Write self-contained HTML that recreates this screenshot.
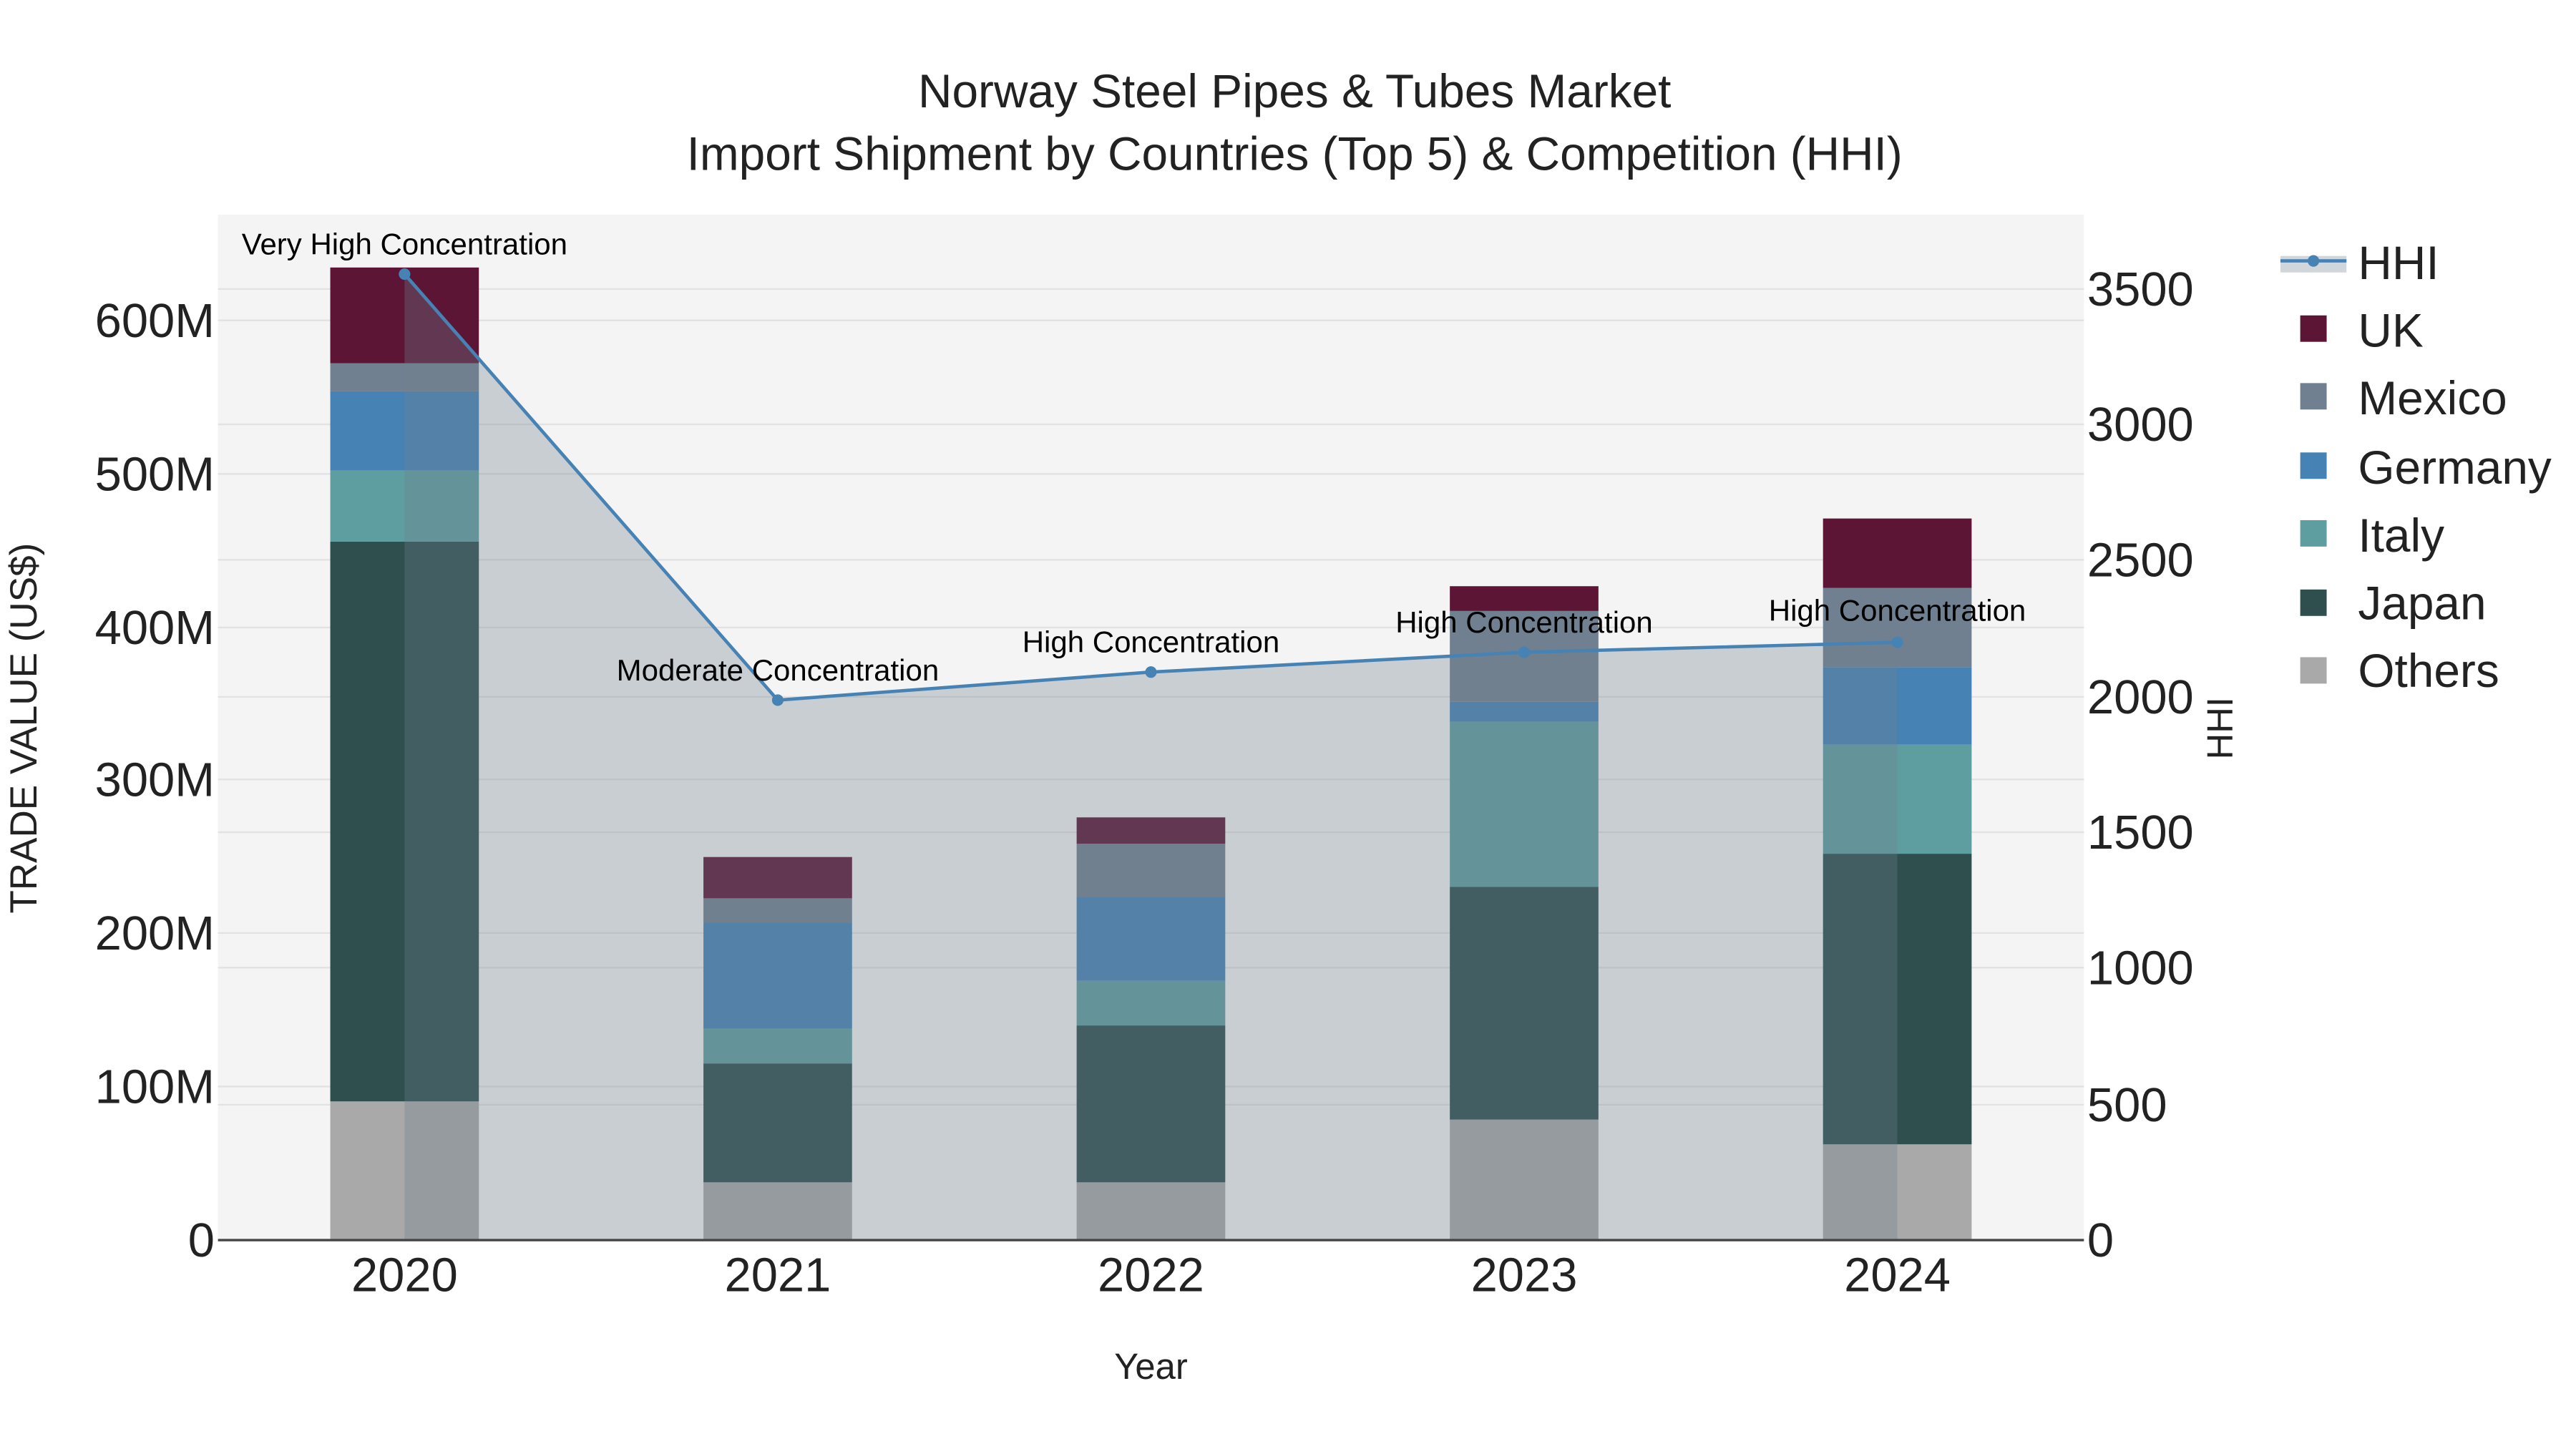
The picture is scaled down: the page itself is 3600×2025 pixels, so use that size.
<!DOCTYPE html>
<html><head><meta charset="utf-8"><style>
html,body{margin:0;padding:0;background:#fff;}
svg{display:block;}
text{font-family:"Liberation Sans",sans-serif;}
</style></head><body>
<svg width="3600" height="2025" viewBox="0 0 1560 877.5" xmlns="http://www.w3.org/2000/svg">
<rect width="1560" height="877.5" fill="#fff"/>
<rect x="132" y="130" width="1130" height="621" fill="#f4f4f4"/>
<g stroke="#e2e2e2" stroke-width="1">
<line x1="132" x2="1262" y1="658" y2="658"/><line x1="132" x2="1262" y1="565" y2="565"/>
<line x1="132" x2="1262" y1="472" y2="472"/><line x1="132" x2="1262" y1="380" y2="380"/>
<line x1="132" x2="1262" y1="287" y2="287"/><line x1="132" x2="1262" y1="194" y2="194"/>
<line x1="132" x2="1262" y1="669" y2="669"/><line x1="132" x2="1262" y1="586" y2="586"/>
<line x1="132" x2="1262" y1="504" y2="504"/><line x1="132" x2="1262" y1="422" y2="422"/>
<line x1="132" x2="1262" y1="339" y2="339"/><line x1="132" x2="1262" y1="257" y2="257"/>
<line x1="132" x2="1262" y1="175" y2="175"/>
</g>
<g>
<rect x="200" y="667" width="90" height="84" fill="#a9a9a9"/>
<rect x="200" y="328" width="90" height="339" fill="#2f4f4f"/>
<rect x="200" y="285" width="90" height="43" fill="#5f9ea0"/>
<rect x="200" y="237" width="90" height="48" fill="#4682b4"/>
<rect x="200" y="220" width="90" height="17" fill="#708090"/>
<rect x="200" y="162" width="90" height="58" fill="#5c1535"/>
<rect x="426" y="716" width="90" height="35" fill="#a9a9a9"/>
<rect x="426" y="644" width="90" height="72" fill="#2f4f4f"/>
<rect x="426" y="623" width="90" height="21" fill="#5f9ea0"/>
<rect x="426" y="559" width="90" height="64" fill="#4682b4"/>
<rect x="426" y="544" width="90" height="15" fill="#708090"/>
<rect x="426" y="519" width="90" height="25" fill="#5c1535"/>
<rect x="652" y="716" width="90" height="35" fill="#a9a9a9"/>
<rect x="652" y="621" width="90" height="95" fill="#2f4f4f"/>
<rect x="652" y="594" width="90" height="27" fill="#5f9ea0"/>
<rect x="652" y="543" width="90" height="51" fill="#4682b4"/>
<rect x="652" y="511" width="90" height="32" fill="#708090"/>
<rect x="652" y="495" width="90" height="16" fill="#5c1535"/>
<rect x="878" y="678" width="90" height="73" fill="#a9a9a9"/>
<rect x="878" y="537" width="90" height="141" fill="#2f4f4f"/>
<rect x="878" y="437" width="90" height="100" fill="#5f9ea0"/>
<rect x="878" y="425" width="90" height="12" fill="#4682b4"/>
<rect x="878" y="370" width="90" height="55" fill="#708090"/>
<rect x="878" y="355" width="90" height="15" fill="#5c1535"/>
<rect x="1104" y="693" width="90" height="58" fill="#a9a9a9"/>
<rect x="1104" y="517" width="90" height="176" fill="#2f4f4f"/>
<rect x="1104" y="451" width="90" height="66" fill="#5f9ea0"/>
<rect x="1104" y="404" width="90" height="47" fill="#4682b4"/>
<rect x="1104" y="356" width="90" height="48" fill="#708090"/>
<rect x="1104" y="314" width="90" height="42" fill="#5c1535"/>
</g>
<polygon points="245,166 471,424 697,407 923,395 1149,389 1149,751 245,751" fill="rgba(112,128,144,0.32)"/>
<polyline points="245,166 471,424 697,407 923,395 1149,389" fill="none" stroke="#4682b4" stroke-width="2"/>
<g fill="#4682b4"><circle cx="245" cy="166" r="3.5"/><circle cx="471" cy="424" r="3.5"/><circle cx="697" cy="407" r="3.5"/><circle cx="923" cy="395" r="3.5"/><circle cx="1149" cy="389" r="3.5"/></g>
<line x1="132" x2="1262" y1="751" y2="751" stroke="#444" stroke-width="1.5"/>
<g font-size="18.2" fill="#000" text-anchor="middle">
<text x="245" y="154">Very High Concentration</text>
<text x="471" y="412">Moderate Concentration</text>
<text x="697" y="395">High Concentration</text>
<text x="923" y="383">High Concentration</text>
<text x="1149" y="376">High Concentration</text>
</g>
<g font-size="28.5" fill="#222" text-anchor="middle">
<text x="784" y="65">Norway Steel Pipes &amp; Tubes Market</text>
<text x="784" y="103">Import Shipment by Countries (Top 5) &amp; Competition (HHI)</text>
</g>
<g font-size="29" fill="#222" text-anchor="end">
<text x="130" y="761">0</text><text x="130" y="668">100M</text><text x="130" y="575">200M</text>
<text x="130" y="482">300M</text><text x="130" y="390">400M</text><text x="130" y="297">500M</text><text x="130" y="204">600M</text>
</g>
<g font-size="29" fill="#222" text-anchor="start">
<text x="1264" y="761">0</text><text x="1264" y="679">500</text><text x="1264" y="596">1000</text>
<text x="1264" y="514">1500</text><text x="1264" y="432">2000</text><text x="1264" y="349">2500</text>
<text x="1264" y="267">3000</text><text x="1264" y="185">3500</text>
</g>
<g font-size="29" fill="#222" text-anchor="middle">
<text x="245" y="782">2020</text><text x="471" y="782">2021</text><text x="697" y="782">2022</text>
<text x="923" y="782">2023</text><text x="1149" y="782">2024</text>
</g>
<text x="697" y="835" font-size="22" fill="#222" text-anchor="middle">Year</text>
<text transform="translate(22,441) rotate(-90)" font-size="23" fill="#222" text-anchor="middle">TRADE VALUE (US$)</text>
<text transform="translate(1352,441) rotate(-90)" font-size="22" fill="#222" text-anchor="middle">HHI</text>
<rect x="1381" y="155" width="40" height="10" fill="rgba(112,128,144,0.32)"/>
<line x1="1381" x2="1421" y1="158" y2="158" stroke="#4682b4" stroke-width="2"/>
<circle cx="1401" cy="158" r="3.5" fill="#4682b4"/>
<g>
<rect x="1393" y="191" width="16" height="16" fill="#5c1535"/>
<rect x="1393" y="232" width="16" height="16" fill="#708090"/>
<rect x="1393" y="274" width="16" height="16" fill="#4682b4"/>
<rect x="1393" y="315" width="16" height="16" fill="#5f9ea0"/>
<rect x="1393" y="357" width="16" height="16" fill="#2f4f4f"/>
<rect x="1393" y="398" width="16" height="16" fill="#a9a9a9"/>
</g>
<g font-size="28.5" fill="#222">
<text x="1428" y="169">HHI</text><text x="1428" y="210">UK</text><text x="1428" y="251">Mexico</text>
<text x="1428" y="293">Germany</text><text x="1428" y="334">Italy</text><text x="1428" y="375">Japan</text><text x="1428" y="416">Others</text>
</g>
</svg>
</body></html>
